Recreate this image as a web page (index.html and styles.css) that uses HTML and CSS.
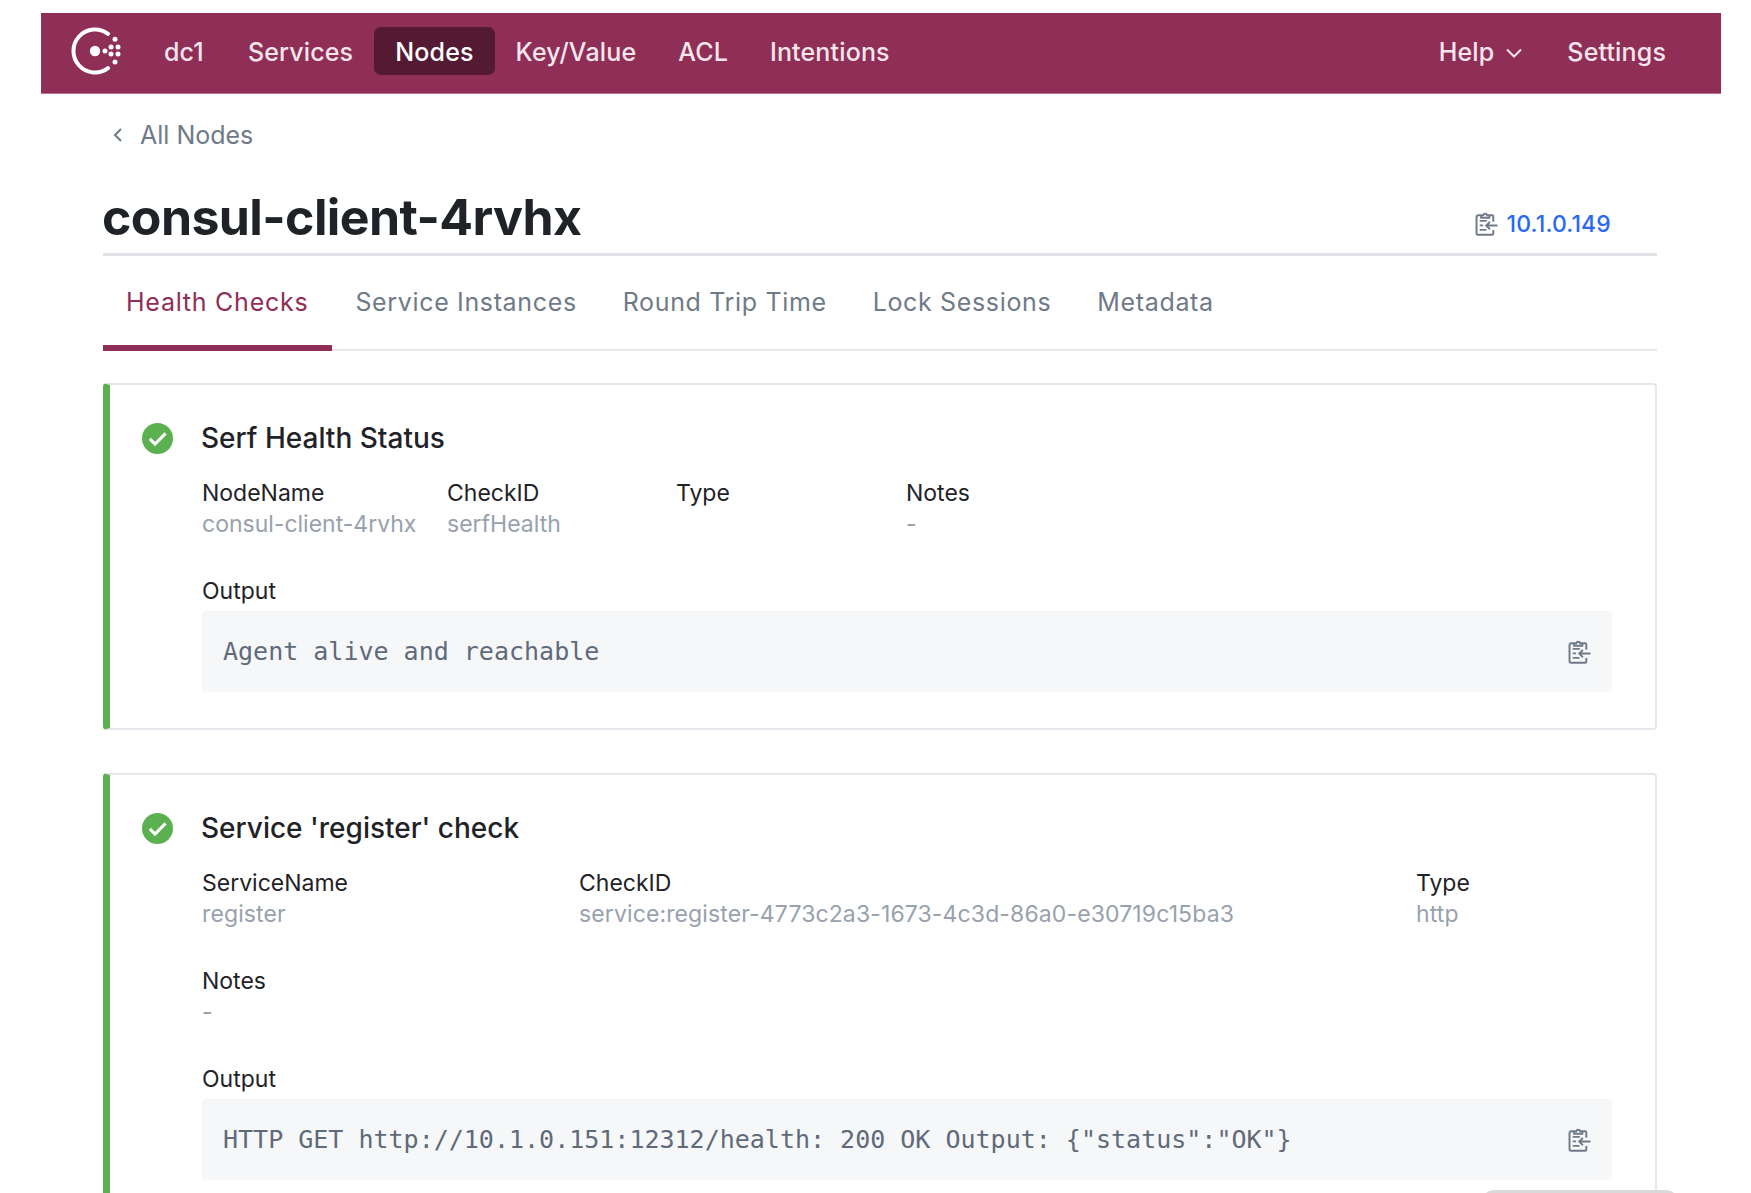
FILE: index.html
```html
<!DOCTYPE html>
<html lang="en">
<head>
<meta charset="utf-8">
<title>consul-client-4rvhx</title>
<link rel="stylesheet" href="styles.css">
</head>
<body>
<svg class="defs" width="0" height="0">
  <symbol id="clip" viewBox="2 1 22.5 22.5">
    <path d="M8 3.6H5.2A1.7 1.7 0 0 0 3.5 5.3v16.2a1.2 1.2 0 0 0 1.2 1.2h14a1.2 1.2 0 0 0 1.2-1.2V18M8 3.6h2.1a2 2 0 0 1 3.8 0h2.1M16 3.6h2.7a1.2 1.2 0 0 1 1.2 1.2V10M8 3.2v2.9h8V3.2" fill="none" stroke="currentColor" stroke-width="1.9"/>
    <path d="M6.6 9.2h7M6.6 13.6h3.4M6.6 18h6.6" fill="none" stroke="currentColor" stroke-width="1.9"/>
    <path d="M24 13.8H13M16.6 10.2l-3.6 3.6 3.6 3.6" fill="none" stroke="currentColor" stroke-width="1.9"/>
  </symbol>
  <symbol id="ok" viewBox="0 0 30 30">
    <circle cx="15" cy="15" r="15" fill="#5bb04f"/>
    <path d="M7.6 15.4l5 5L22.8 10" fill="none" stroke="#fff" stroke-width="3"/>
  </symbol>
</svg>
<div class="page">
  <header class="topbar">
    <div class="nav-left">
      <svg class="logo" viewBox="0 0 50 48" aria-label="Consul">
        <path d="M37 6.9A21.5 21.5 0 1 0 37 41.1" fill="none" stroke="#fff" stroke-width="4" stroke-linecap="round"/>
        <circle cx="24" cy="24" r="5.2" fill="#fff"/>
        <circle cx="34" cy="24" r="2.5" fill="#fff"/>
        <circle cx="44" cy="12.3" r="2.5" fill="#fff"/>
        <circle cx="40" cy="20" r="2.5" fill="#fff"/>
        <circle cx="47" cy="20" r="2.5" fill="#fff"/>
        <circle cx="40" cy="27" r="2.5" fill="#fff"/>
        <circle cx="47" cy="27" r="2.5" fill="#fff"/>
        <circle cx="44" cy="35" r="2.5" fill="#fff"/>
      </svg>
      <a class="nav-link dc">dc1</a>
      <a class="nav-link">Services</a>
      <a class="nav-link active">Nodes</a>
      <a class="nav-link">Key/Value</a>
      <a class="nav-link">ACL</a>
      <a class="nav-link">Intentions</a>
    </div>
    <div class="nav-right">
      <a class="nav-link help">Help
        <svg class="caret" viewBox="0 0 18 12"><path d="M2 2.5l7 7 7-7" fill="none" stroke="currentColor" stroke-width="2"/></svg>
      </a>
      <a class="nav-link">Settings</a>
    </div>
  </header>

  <main class="content">
    <div class="crumb">
      <svg class="back" viewBox="0 0 10 16"><path d="M8 2L2 8l6 6" fill="none" stroke="currentColor" stroke-width="2"/></svg>
      <span>All Nodes</span>
    </div>

    <div class="title-row">
      <h1>consul-client-4rvhx</h1>
      <div class="addr">
        <svg class="copy"><use href="#clip"/></svg>
        <a>10.1.0.149</a>
      </div>
    </div>

    <nav class="tabs">
      <a class="tab on">Health Checks</a>
      <a class="tab">Service Instances</a>
      <a class="tab">Round Trip Time</a>
      <a class="tab">Lock Sessions</a>
      <a class="tab">Metadata</a>
    </nav>

    <section class="card">
      <div class="card-head">
        <svg class="ok"><use href="#ok"/></svg>
        <h2>Serf Health Status</h2>
      </div>
      <dl class="meta cols-a">
        <div><dt>NodeName</dt><dd>consul-client-4rvhx</dd></div>
        <div><dt>CheckID</dt><dd>serfHealth</dd></div>
        <div><dt>Type</dt><dd></dd></div>
        <div><dt>Notes</dt><dd>-</dd></div>
      </dl>
      <div class="out-label">Output</div>
      <div class="code">
        <code>Agent alive and reachable</code>
        <svg class="copy"><use href="#clip"/></svg>
      </div>
    </section>

    <section class="card">
      <div class="card-head">
        <svg class="ok"><use href="#ok"/></svg>
        <h2>Service 'register' check</h2>
      </div>
      <dl class="meta cols-b">
        <div><dt>ServiceName</dt><dd>register</dd></div>
        <div><dt>CheckID</dt><dd>service:register-4773c2a3-1673-4c3d-86a0-e30719c15ba3</dd></div>
        <div><dt>Type</dt><dd>http</dd></div>
      </dl>
      <dl class="meta notes">
        <div><dt>Notes</dt><dd>-</dd></div>
      </dl>
      <div class="out-label">Output</div>
      <div class="code">
        <code>HTTP GET http://10.1.0.151:12312/health: 200 OK Output: {"status":"OK"}</code>
        <svg class="copy"><use href="#clip"/></svg>
      </div>
    </section>
  </main>
  <div class="edge-shadow"></div>
</div>
</body>
</html>
```
FILE: styles.css
```css
html, body { margin: 0; padding: 0; height: 100%; overflow: hidden; background: #fff; }
body { font-family: Inter, "Liberation Sans", sans-serif; color: #1f2328; }
a { color: inherit; text-decoration: none; }
.defs { position: absolute; }
.page { height: 1193px; padding: 13px 30px 0 41px; box-sizing: border-box; overflow: hidden; }

.topbar { height: 81px; box-sizing: border-box; background: #8f2e56; border-bottom: 1px solid #c56f92; display: flex; justify-content: space-between; align-items: flex-start; padding: 14px 34px 0 30px; }
.nav-left, .nav-right { display: flex; align-items: center; }
.logo { width: 50px; height: 48px; margin-right: 21px; }
.nav-link { box-sizing: border-box; font-size: 25px; font-weight: 500; letter-spacing: .15px; line-height: 46px; height: 48px; padding: 2px 21px 0; color: #f5e6ec; border-radius: 7px; white-space: nowrap; }
.nav-link.dc { padding-left: 22px; padding-right: 23px; }
.nav-link.active { background: #551a33; color: #fff; }
.help { display: flex; align-items: center; padding-right: 23px; }
.caret { width: 18px; height: 12px; margin-left: 11px; margin-top: 2px; }

.content { margin: 0 64px 0 62px; }
.crumb { display: flex; align-items: center; height: 44px; margin-top: 19px; color: #6f7a89; font-size: 25px; }
.back { width: 10px; height: 16px; margin: 0 17px 0 10px; }

.title-row { display: flex; justify-content: space-between; align-items: flex-end; height: 82px; margin-top: 14px; border-bottom: 3px solid #dfe3e8; box-sizing: content-box; padding-right: 46px; }
h1 { margin: 0 0 4px -1px; font-size: 50px; line-height: 64px; font-weight: 700; letter-spacing: -0.6px; color: #1f2328; }
.addr { display: flex; align-items: center; gap: 9px; margin-bottom: 15px; font-size: 23px; font-weight: 500; letter-spacing: .15px; color: #2a68f5; }
.copy { width: 23px; height: 24px; color: #6f7a89; flex: none; }

.tabs { display: flex; height: 93px; border-bottom: 2px solid #e4e7eb; box-sizing: content-box; margin-top: 0; }
.tab { padding: 0 23px; height: 93px; line-height: 92px; box-sizing: border-box; font-size: 25px; letter-spacing: .65px; color: #6f7a89; margin-bottom: -2px; }
.tab.on { color: #8f2e56; border-bottom: 6px solid #8f2e56; padding: 0 24px 0 23px; height: 95px; letter-spacing: .75px; }

.card { margin-top: 32px; height: 347px; box-sizing: border-box; border: 2px solid #e4e7eb; border-left: 7px solid #5bb04f; border-radius: 4px; padding: 0 43px 0 92px; position: relative; }
.card + .card { margin-top: 43px; height: 600px; }
.card-head { height: 42px; margin: 32px 0 19px -60px; display: flex; align-items: center; gap: 28px; }
.ok { width: 31px; height: 31px; flex: none; }
h2 { margin: 0; font-size: 28px; font-weight: 500; color: #1f2328; }
.meta { display: grid; margin: 0; font-size: 23px; line-height: 31px; height: 66px; }
.cols-a { grid-template-columns: 245px 229px 230px 1fr; }
.cols-b { grid-template-columns: 377px 837px 1fr; }
.notes { margin-top: 32px; }
dt { color: #1f2328; }
dd { margin: 0; color: #98a1ad; height: 31px; white-space: nowrap; }
.cols-b dd { letter-spacing: .12px; }
.out-label { font-size: 23px; line-height: 31px; margin-top: 32px; color: #1f2328; height: 31px; }
.code { height: 81px; margin-top: 4px; background: #f6f7f9; border-radius: 4px; display: flex; align-items: center; justify-content: space-between; padding: 0 21px; }
code { font-family: "DejaVu Sans Mono", monospace; font-size: 25px; color: #5f6a7a; white-space: pre; }

.edge-shadow { position: absolute; left: 1480px; top: 1190px; width: 200px; height: 30px; border-radius: 15px; background: #d9d9d9; }
```
